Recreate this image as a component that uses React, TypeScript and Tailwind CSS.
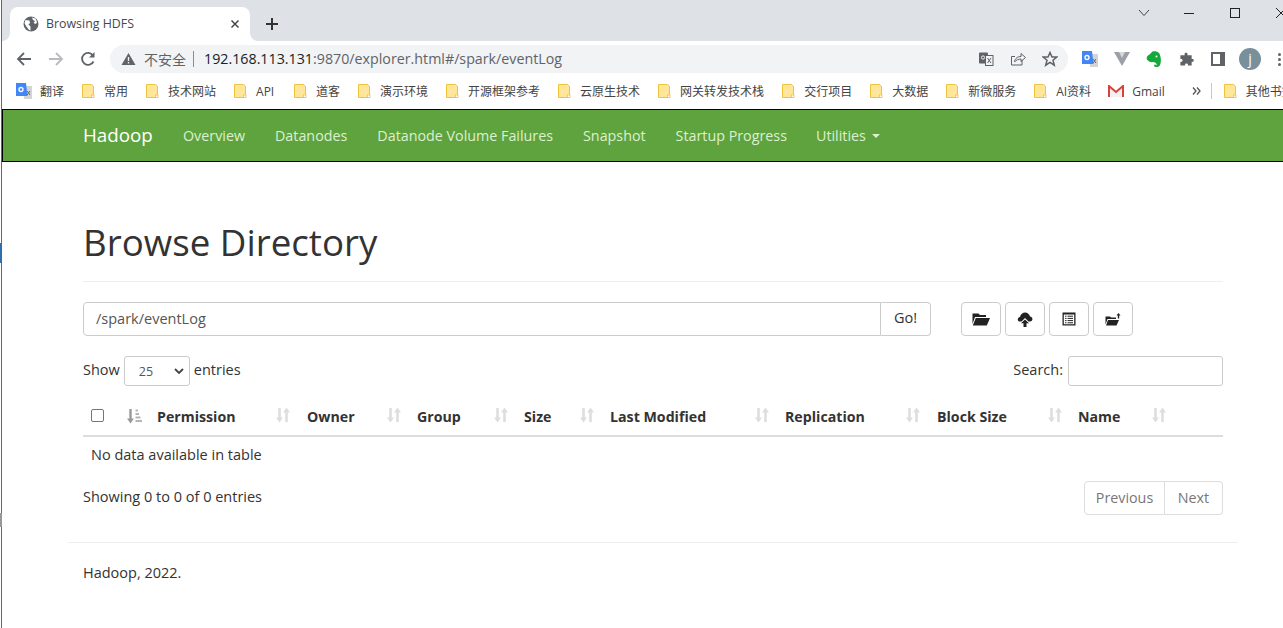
import React from "react";

const UI = '"Open Sans","Noto Sans CJK SC",sans-serif';

function Folder() {
  return (
    <svg width="16" height="16" viewBox="0 0 16 16" className="shrink-0">
      <path d="M2.5 1.5H11.5L13.5 3.5V14.5H2.5Z" fill="#ffe699" stroke="#f0c33c" />
      <rect x="11.5" y="12" width="2.5" height="2.5" fill="#fff" stroke="#f0c33c" strokeWidth="0.8" />
    </svg>
  );
}

function GTranslate() {
  return (
    <svg width="16" height="16" viewBox="0 0 16 16" className="shrink-0">
      <path d="M7 3H16V16H8Z" fill="#d4d4d4" />
      <path d="M0 0H10L11.5 13H0Z" fill="#4285f4" />
      <circle cx="5" cy="6.5" r="2" fill="none" stroke="#fff" strokeWidth="1.3" />
      <path d="M11 8L14 12M14 8L11 12" stroke="#666" strokeWidth="1" />
    </svg>
  );
}

function Bookmark({ label, icon, w }: { label: string; icon?: React.ReactNode; w?: number }) {
  return (
    <div className="flex items-center gap-2 shrink-0">
      {icon ?? <Folder />}
      <span className="text-[12px] text-[#444] whitespace-nowrap pt-[1px]" style={w ? { width: w } : undefined}>
        {label}
      </span>
    </div>
  );
}

function SortIcon({ active }: { active?: boolean }) {
  if (active) {
    return (
      <svg width="15" height="16" viewBox="0 0 15 16" className="shrink-0">
        <path d="M3.5 1V11" stroke="#999" strokeWidth="2.4" />
        <path d="M0 10.5H7L3.5 15.5Z" fill="#999" />
        <path d="M8.5 2.5H11M8.5 6H12M8.5 9.5H13.5M8.5 13H15" stroke="#b5b5b5" strokeWidth="2.2" />
      </svg>
    );
  }
  return (
    <svg width="15" height="16" viewBox="0 0 15 16" className="shrink-0">
      <path d="M3.5 1V11" stroke="#dedede" strokeWidth="2.6" />
      <path d="M0 10.5H7L3.5 15.5Z" fill="#dedede" />
      <path d="M10.5 15V5" stroke="#dedede" strokeWidth="2.6" />
      <path d="M7 5.5H14L10.5 0.5Z" fill="#dedede" />
    </svg>
  );
}

const IconBtn = ({ children }: { children: React.ReactNode }) => (
  <button className="w-10 h-[34px] flex items-center justify-center bg-white border border-[#ccc] rounded-[4px]">{children}</button>
);

const cols: [string, number, number][] = [
  ["Permission", 157, 276],
  ["Owner", 307, 387],
  ["Group", 417, 494],
  ["Size", 524, 580],
  ["Last Modified", 610, 755],
  ["Replication", 785, 906],
  ["Block Size", 937, 1048],
  ["Name", 1078, 1152],
];

export default function App() {
  return (
    <div className="w-[1283px] h-[628px] overflow-hidden bg-white flex relative" style={{ fontFamily: UI }}>
      <div className="w-[2px] shrink-0 flex justify-end bg-white">
        <div className="w-[1px] h-full bg-[#666]" />
      </div>
      <div className="absolute left-0 top-[243px] w-[2px] h-[20px] bg-[#2f6fb0]" />
      <div className="absolute left-0 top-[513px] w-[2px] h-[14px] bg-[#999]" />
      <div className="flex-1 min-w-0 flex flex-col">
        {/* Tab strip */}
        <div className="h-[41px] bg-[#dee1e6] flex items-end pl-[8px] shrink-0 relative">
          <div className="w-[240px] h-[34px] bg-white rounded-t-[8px] flex items-center pl-[13px] pr-[10px] relative">
            <div className="absolute -left-[8px] bottom-0 w-[8px] h-[8px] bg-white">
              <div className="w-full h-full bg-[#dee1e6] rounded-br-[8px]" />
            </div>
            <div className="absolute -right-[8px] bottom-0 w-[8px] h-[8px] bg-white">
              <div className="w-full h-full bg-[#dee1e6] rounded-bl-[8px]" />
            </div>
            <svg width="16" height="16" viewBox="0 0 16 16" className="shrink-0">
              <circle cx="8" cy="8" r="7.5" fill="#5f6368" />
              <path d="M2.5 4L6.5 4.5L7 7L5.5 8.5L7.5 10.5L7.5 14.5L6 14L3 10L1.5 7Z" fill="#fff" />
              <path d="M9 1.5L10 4L12 5L10.5 7L13 8L14 6L12.5 2.5Z" fill="#fff" />
            </svg>
            <span className="ml-[7px] text-[12.4px] text-[#45494d] flex-1 whitespace-nowrap">Browsing HDFS</span>
            <svg width="10" height="10" viewBox="0 0 10 10">
              <path d="M1.5 1.5L8.5 8.5M8.5 1.5L1.5 8.5" stroke="#45494d" strokeWidth="1.5" />
            </svg>
          </div>
          <svg width="14" height="14" viewBox="0 0 14 14" className="ml-[15px] mb-[10px]">
            <path d="M7 1V13M1 7H13" stroke="#333" strokeWidth="2" />
          </svg>
          <div className="flex-1" />
          <svg width="12" height="8" viewBox="0 0 12 8" className="absolute left-[1136px] top-[9px]">
            <path d="M1 1L6 6.5L11 1" fill="none" stroke="#444" />
          </svg>
          <div className="absolute left-[1182px] top-[13px] w-[10px] h-[1px] bg-[#222]" />
          <div className="absolute left-[1228px] top-[8px] w-[10px] h-[10px] border border-[#222]" />
          <svg width="10" height="10" viewBox="0 0 10 10" className="absolute left-[1274px] top-[8px]">
            <path d="M0 0L10 10M10 0L0 10" stroke="#222" />
          </svg>
        </div>
        {/* Toolbar */}
        <div className="h-[32px] bg-white flex items-center shrink-0 pt-[4px] relative">
          <svg width="16" height="16" viewBox="0 0 16 16" className="ml-[14px]">
            <path d="M15 8H2M8 2L2 8L8 14" fill="none" stroke="#5f6368" strokeWidth="1.8" />
          </svg>
          <svg width="16" height="16" viewBox="0 0 16 16" className="ml-[16px]">
            <path d="M1 8H14M8 2L14 8L8 14" fill="none" stroke="#b8babd" strokeWidth="1.8" />
          </svg>
          <svg width="16" height="16" viewBox="0 0 16 16" className="ml-[16px]">
            <path d="M13.5 10.5A6 6 0 1 1 13 4.5" fill="none" stroke="#5f6368" strokeWidth="1.8" />
            <path d="M14.5 1V6.5H9Z" fill="#5f6368" />
          </svg>
          <div className="ml-[14px] w-[958px] h-[28px] rounded-full bg-[#f1f3f4] flex items-center pl-[11px] pr-[10px] shrink-0">
            <svg width="15" height="14" viewBox="0 0 15 14" className="shrink-0">
              <path d="M7.5 1L14.5 13H0.5Z" fill="#5f6368" />
              <path d="M7.5 5V9M7.5 10V11.5" stroke="#f1f3f4" strokeWidth="1.4" />
            </svg>
            <span className="ml-[8px] text-[14px] text-[#5f6368] whitespace-nowrap">不安全</span>
            <div className="ml-[7px] w-[1px] h-[16px] bg-[#8a8d91]" />
            <span className="ml-[10px] text-[14.25px] text-[#5f6368] whitespace-nowrap">
              <span className="text-[#202124]">192.168.113.131</span>:9870/explorer.html#/spark/eventLog
            </span>
            <div className="flex-1" />
            <svg width="16" height="16" viewBox="0 0 16 16" className="shrink-0">
              <rect x="1" y="1.5" width="9" height="11" rx="1" fill="#5f6368" />
              <circle cx="5" cy="6.5" r="1.6" fill="none" stroke="#f1f3f4" />
              <rect x="7.5" y="4.5" width="7.5" height="10" fill="#f1f3f4" stroke="#5f6368" />
              <path d="M9.5 7L13 12M13 7L9.5 12" stroke="#5f6368" />
            </svg>
            <svg width="16" height="16" viewBox="0 0 16 16" className="ml-[16px] shrink-0">
              <path d="M12 9V14H1.5V5.5H5" fill="none" stroke="#5f6368" />
              <path d="M4.5 11C5 7 8 5.5 11 5.5V2.5L15.5 6.5L11 10.5V8C8.5 8 6 9 4.5 11Z" fill="none" stroke="#5f6368" />
            </svg>
            <svg width="16" height="16" viewBox="0 0 16 16" className="ml-[16px] shrink-0">
              <path d="M8 1.5L10 6H14.8L11 9.2L12.3 14.2L8 11.4L3.7 14.2L5 9.2L1.2 6H6Z" fill="none" stroke="#5f6368" strokeWidth="1.5" />
            </svg>
          </div>
          <div className="ml-[14px] shrink-0"><GTranslate /></div>
          <svg width="16" height="14" viewBox="0 0 16 14" className="ml-[16px] shrink-0">
            <path d="M0 0H16L8 14Z" fill="#9aa0a6" />
            <path d="M5 0H11L8 6Z" fill="#d5d7da" />
          </svg>
          <svg width="16" height="17" viewBox="0 0 16 17" className="ml-[16px] shrink-0">
            <path d="M3.5 3.5L6.5 0.5C9 0 11.5 0.5 13 2C14.5 4 15.5 9 14.5 12.5C14 15.5 11.5 16.5 9.5 16C7.5 15.5 7.5 13.5 9.5 13.5L10.5 14.5C11.5 13 9.5 11.5 7.5 11C5 11.5 2 10.5 1 8.5C0.5 7 0.5 5 3.5 3.5Z" fill="#14a93b" />
            <circle cx="10.5" cy="5.5" r="1" fill="#fff" />
          </svg>
          <svg width="15" height="15" viewBox="0 0 16 16" className="ml-[17px] shrink-0">
            <path d="M6 1.5C6 0.5 9 0.5 9 1.5V3.5H13.5V7.5H15C16 7.5 16 10.5 15 10.5H13.5V14.5H9.5V13C9.5 12 6.5 12 6.5 13V14.5H1.5V10.5H3C4 10.5 4 7.5 3 7.5H1.5V3.5H6Z" fill="#5f6368" />
          </svg>
          <div className="ml-[17px] w-[14px] h-[14px] border-[2px] border-r-[5px] border-[#5f6368] shrink-0" />
          <div className="ml-[14px] w-[22px] h-[22px] rounded-full bg-[#78909c] flex items-center justify-center text-white text-[14px] leading-none shrink-0">j</div>
          <div className="ml-[17px] flex flex-col gap-[2px] shrink-0">
            <span className="w-[3px] h-[3px] bg-[#5f6368] rounded-full" />
            <span className="w-[3px] h-[3px] bg-[#5f6368] rounded-full" />
            <span className="w-[3px] h-[3px] bg-[#5f6368] rounded-full" />
          </div>
        </div>
        {/* Bookmarks */}
        <div className="h-[36px] bg-white flex items-center pl-[14px] gap-[16px] shrink-0 overflow-hidden">
          <Bookmark label="翻译" icon={<GTranslate />} />
          <Bookmark label="常用" />
          <Bookmark label="技术网站" />
          <Bookmark label="API" w={20} />
          <Bookmark label="道客" />
          <Bookmark label="演示环境" />
          <Bookmark label="开源框架参考" />
          <Bookmark label="云原生技术" />
          <Bookmark label="网关转发技术栈" />
          <Bookmark label="交行项目" />
          <Bookmark label="大数据" />
          <Bookmark label="新微服务" />
          <Bookmark label="AI资料" w={36} />
          <Bookmark
            label="Gmail"
            icon={
              <svg width="16" height="12" viewBox="0 0 16 12" className="shrink-0">
                <path d="M1 12V1L8 7L15 1V12" fill="#f1f1f1" stroke="#d9423a" strokeWidth="2" />
              </svg>
            }
          />
          <svg width="9" height="8" viewBox="0 0 9 8" className="ml-[11px] shrink-0">
            <path d="M1 0.5L4 4L1 7.5M5 0.5L8 4L5 7.5" fill="none" stroke="#555" strokeWidth="1.3" />
          </svg>
          <div className="-ml-[6px] w-[1px] h-[16px] bg-[#c8c8c8] shrink-0" />
          <div className="-ml-[6px] shrink-0"><Bookmark label="其他书签" /></div>
        </div>
        {/* Navbar */}
        <nav className="h-[53px] shrink-0 bg-[#5fa33e] border-y border-l border-[#000] flex items-center pl-[80px]">
          <span className="text-[18.8px] text-white w-[100px] whitespace-nowrap">Hadoop</span>
          <div className="flex items-center gap-[30px] text-[14.3px] text-[#dcf0cf] whitespace-nowrap">
            <span>Overview</span>
            <span>Datanodes</span>
            <span>Datanode Volume Failures</span>
            <span>Snapshot</span>
            <span>Startup Progress</span>
            <span className="flex items-center gap-[6px] -ml-[1px]">
              Utilities
              <span className="w-0 h-0 border-x-[4px] border-x-transparent border-t-[4px] border-t-[#dcf0cf]" />
            </span>
          </div>
        </nav>
        {/* Content */}
        <main className="ml-[66px] w-[1170px] px-[15px] text-[#333] text-[14.5px]">
          <div className="h-[120px] border-b border-[#eee] flex items-end pb-[19px]">
            <h1 className="text-[36.7px] leading-[40px] font-normal text-[#333]">Browse Directory</h1>
          </div>
          <div className="flex mt-[20px] h-[34px]">
            <div className="w-[798px] h-full border border-[#ccc] rounded-l-[4px] flex items-center pl-[12px] pb-[1px] text-[#555]">/spark/eventLog</div>
            <div className="w-[50px] h-full border border-l-0 border-[#ccc] rounded-r-[4px] flex items-center justify-center pb-[2px]">Go!</div>
            <div className="ml-[30px] flex gap-[4px]">
              <IconBtn>
                <svg width="18" height="14" viewBox="0 0 18 14">
                  <path d="M0.5 1.5H6.5L8 3H14V5H3L0.5 12Z" fill="#222" />
                  <path d="M3.8 6H18L14.8 13.5H0.8Z" fill="#222" />
                </svg>
              </IconBtn>
              <IconBtn>
                <svg width="16" height="15" viewBox="0 0 16 15">
                  <path d="M3 9.5C0 9.5 0 5.5 3 5C3.5 2 6 0.5 8 0.5C10.5 0.5 12.5 2.5 13 4.5C16.5 5 16 9.5 13 9.5H11.5L8 6L4.5 9.5Z" fill="#222" />
                  <path d="M8 7.5L12 11.2H9.5V15H6.5V11.2H4Z" fill="#222" />
                </svg>
              </IconBtn>
              <IconBtn>
                <svg width="14" height="14" viewBox="0 0 14 14">
                  <path fillRule="evenodd" d="M0.5 0.5H13.5V13.5H0.5ZM1.8 2.5V12.2H12.2V2.5Z" fill="#222" />
                  <path d="M3 4.2H4.5M5.5 4.2H11M3 6.4H4.5M5.5 6.4H11M3 8.6H4.5M5.5 8.6H11M3 10.8H4.5M5.5 10.8H11" stroke="#222" />
                </svg>
              </IconBtn>
              <IconBtn>
                <svg width="16" height="13" viewBox="0 0 16 13">
                  <path d="M0.5 3.5H5L6 4.5H11V6H2.5L0.5 11.5Z" fill="#222" />
                  <path d="M3 7H14L11.5 12.5H1Z" fill="#222" />
                  <path d="M13.5 5.5V2" stroke="#222" strokeWidth="1.4" />
                  <path d="M11.5 2.5L13.5 0L15.5 2.5Z" fill="#222" />
                </svg>
              </IconBtn>
            </div>
          </div>
          <div className="flex items-center justify-between mt-[20px] h-[30px]">
            <div className="flex items-center">
              <span className="pb-[2px]">Show</span>
              <div className="ml-[4px] w-[66px] h-[30px] border border-[#ccc] rounded-[3px] flex items-center justify-between pl-[14px] pr-[5px] text-[12.5px] text-[#555]">
                <span className="pt-[2px]">25</span>
                <svg width="10" height="6" viewBox="0 0 10 6">
                  <path d="M1 1L5 5L9 1" fill="none" stroke="#444" strokeWidth="1.8" />
                </svg>
              </div>
              <span className="ml-[4px] pb-[2px]">entries</span>
            </div>
            <div className="flex items-center">
              <span className="pb-[2px]">Search:</span>
              <div className="ml-[5px] w-[155px] h-[30px] border border-[#ccc] rounded-[3px]" />
            </div>
          </div>
          {/* Table header */}
          <div className="mt-[12px] h-[39px] border-b-2 border-[#ddd] relative text-[14.2px]">
            <div className="absolute left-[8px] top-[11px] w-[13px] h-[13px] border border-[#767676] rounded-[2px] bg-white" />
            <div className="absolute left-[44px] top-[10px]"><SortIcon active /></div>
            {cols.map(([label, x, ix]) => (
              <React.Fragment key={label}>
                <span className="absolute top-[8px] font-bold text-[#333] whitespace-nowrap" style={{ left: x - 83 }}>{label}</span>
                <div className="absolute top-[9px]" style={{ left: ix - 83 }}><SortIcon /></div>
              </React.Fragment>
            ))}
          </div>
          <div className="h-[37px] flex items-center pl-[8px] pb-[2px]">No data available in table</div>
          <div className="flex items-start justify-between mt-[7px] h-[34px]">
            <span className="mt-[5px]">Showing 0 to 0 of 0 entries</span>
            <div className="flex text-[#777] text-[14.3px]">
              <div className="w-[81px] h-[34px] border border-[#ddd] rounded-l-[4px] flex items-center justify-center pb-[1px]">Previous</div>
              <div className="w-[58px] h-[34px] border border-l-0 border-[#ddd] rounded-r-[4px] flex items-center justify-center pb-[1px]">Next</div>
            </div>
          </div>
        </main>
        <div className="ml-[66px] w-[1170px] mt-[27px] border-t border-[#eee] px-[15px] pt-[19px] text-[14.5px] text-[#333]">Hadoop, 2022.</div>
      </div>
    </div>
  );
}
